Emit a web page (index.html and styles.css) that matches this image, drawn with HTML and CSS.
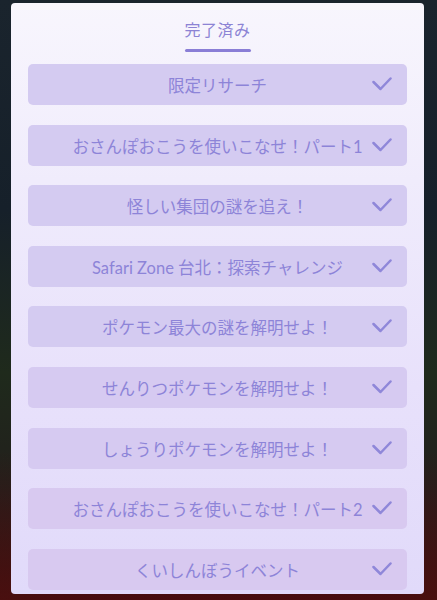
FILE: index.html
```html
<!DOCTYPE html>
<html lang="ja">
<head>
<meta charset="utf-8">
<link rel="stylesheet" href="styles.css">
</head>
<body>
<div class="screen">
  <div class="panel">
    <div class="header">
      <div class="title">完了済み</div>
      <div class="underline"></div>
    </div>
    <ul class="list">
      <li class="row"><span class="label">限定リサーチ</span><svg class="check" viewBox="0 0 20 14"><polyline points="1.5,5 8.5,12 18.5,1.5"/></svg></li>
      <li class="row"><span class="label">おさんぽおこうを使いこなせ！パート1</span><svg class="check" viewBox="0 0 20 14"><polyline points="1.5,5 8.5,12 18.5,1.5"/></svg></li>
      <li class="row"><span class="label">怪しい集団の謎を追え！</span><svg class="check" viewBox="0 0 20 14"><polyline points="1.5,5 8.5,12 18.5,1.5"/></svg></li>
      <li class="row"><span class="label">Safari Zone 台北：探索チャレンジ</span><svg class="check" viewBox="0 0 20 14"><polyline points="1.5,5 8.5,12 18.5,1.5"/></svg></li>
      <li class="row"><span class="label">ポケモン最大の謎を解明せよ！</span><svg class="check" viewBox="0 0 20 14"><polyline points="1.5,5 8.5,12 18.5,1.5"/></svg></li>
      <li class="row"><span class="label">せんりつポケモンを解明せよ！</span><svg class="check" viewBox="0 0 20 14"><polyline points="1.5,5 8.5,12 18.5,1.5"/></svg></li>
      <li class="row"><span class="label">しょうりポケモンを解明せよ！</span><svg class="check" viewBox="0 0 20 14"><polyline points="1.5,5 8.5,12 18.5,1.5"/></svg></li>
      <li class="row"><span class="label">おさんぽおこうを使いこなせ！パート2</span><svg class="check" viewBox="0 0 20 14"><polyline points="1.5,5 8.5,12 18.5,1.5"/></svg></li>
      <li class="row"><span class="label">くいしんぼうイベント</span><svg class="check" viewBox="0 0 20 14"><polyline points="1.5,5 8.5,12 18.5,1.5"/></svg></li>
    </ul>
  </div>
</div>
</body>
</html>
```

FILE: styles.css
```css
* { box-sizing: border-box; }
html, body { margin: 0; padding: 0; }
body {
  width: 437px;
  height: 600px;
  overflow: hidden;
  font-family: Lato, "Noto Sans CJK JP", sans-serif;
}
.screen {
  width: 437px;
  height: 600px;
  padding: 3px 13px 6px 11px;
  background:
    linear-gradient(180deg, rgba(0,0,0,0) 75%, rgba(80,14,14,0.8) 100%),
    linear-gradient(180deg, #1a242d 0%, #16202a 35%, #1f2a1c 62%, #221f1c 82%, #2e1212 100%);
}
.panel {
  height: 591px;
  border-radius: 4px;
  background: linear-gradient(180deg, #f8f6fd 0%, #f0ecfc 30%, #e8e1fb 65%, #e1dafa 100%);
  padding: 17px 17px 0 17px;
  display: flex;
  flex-direction: column;
}
.header {
  display: flex;
  flex-direction: column;
  align-items: center;
}
.title {
  font-size: 16px;
  line-height: 20px;
  color: #8c83d4;
  letter-spacing: 0.5px;
}
.underline {
  margin-top: 9px;
  width: 66px;
  height: 3px;
  border-radius: 1.5px;
  background: #8a7ed6;
}
.list {
  list-style: none;
  margin: 12px 0 0 0;
  padding: 0;
  display: flex;
  flex-direction: column;
  gap: 19.6px;
}
.row {
  position: relative;
  height: 41px;
  border-radius: 5px;
  background: #d4cbf1;
  display: flex;
  align-items: center;
  justify-content: center;
}
.row:nth-child(n+6) { background: #d6caf1; }
.row:nth-child(n+8) { background: #d8c9f0; }
.label {
  font-size: 16.5px;
  color: #8d84d8;
  white-space: nowrap;
  padding-top: 1px;
}
.check {
  position: absolute;
  right: 15px;
  top: 13px;
  width: 20px;
  height: 14px;
  fill: none;
  stroke: #8f87d9;
  stroke-width: 2.5;
  stroke-linecap: round;
  stroke-linejoin: round;
}
```
